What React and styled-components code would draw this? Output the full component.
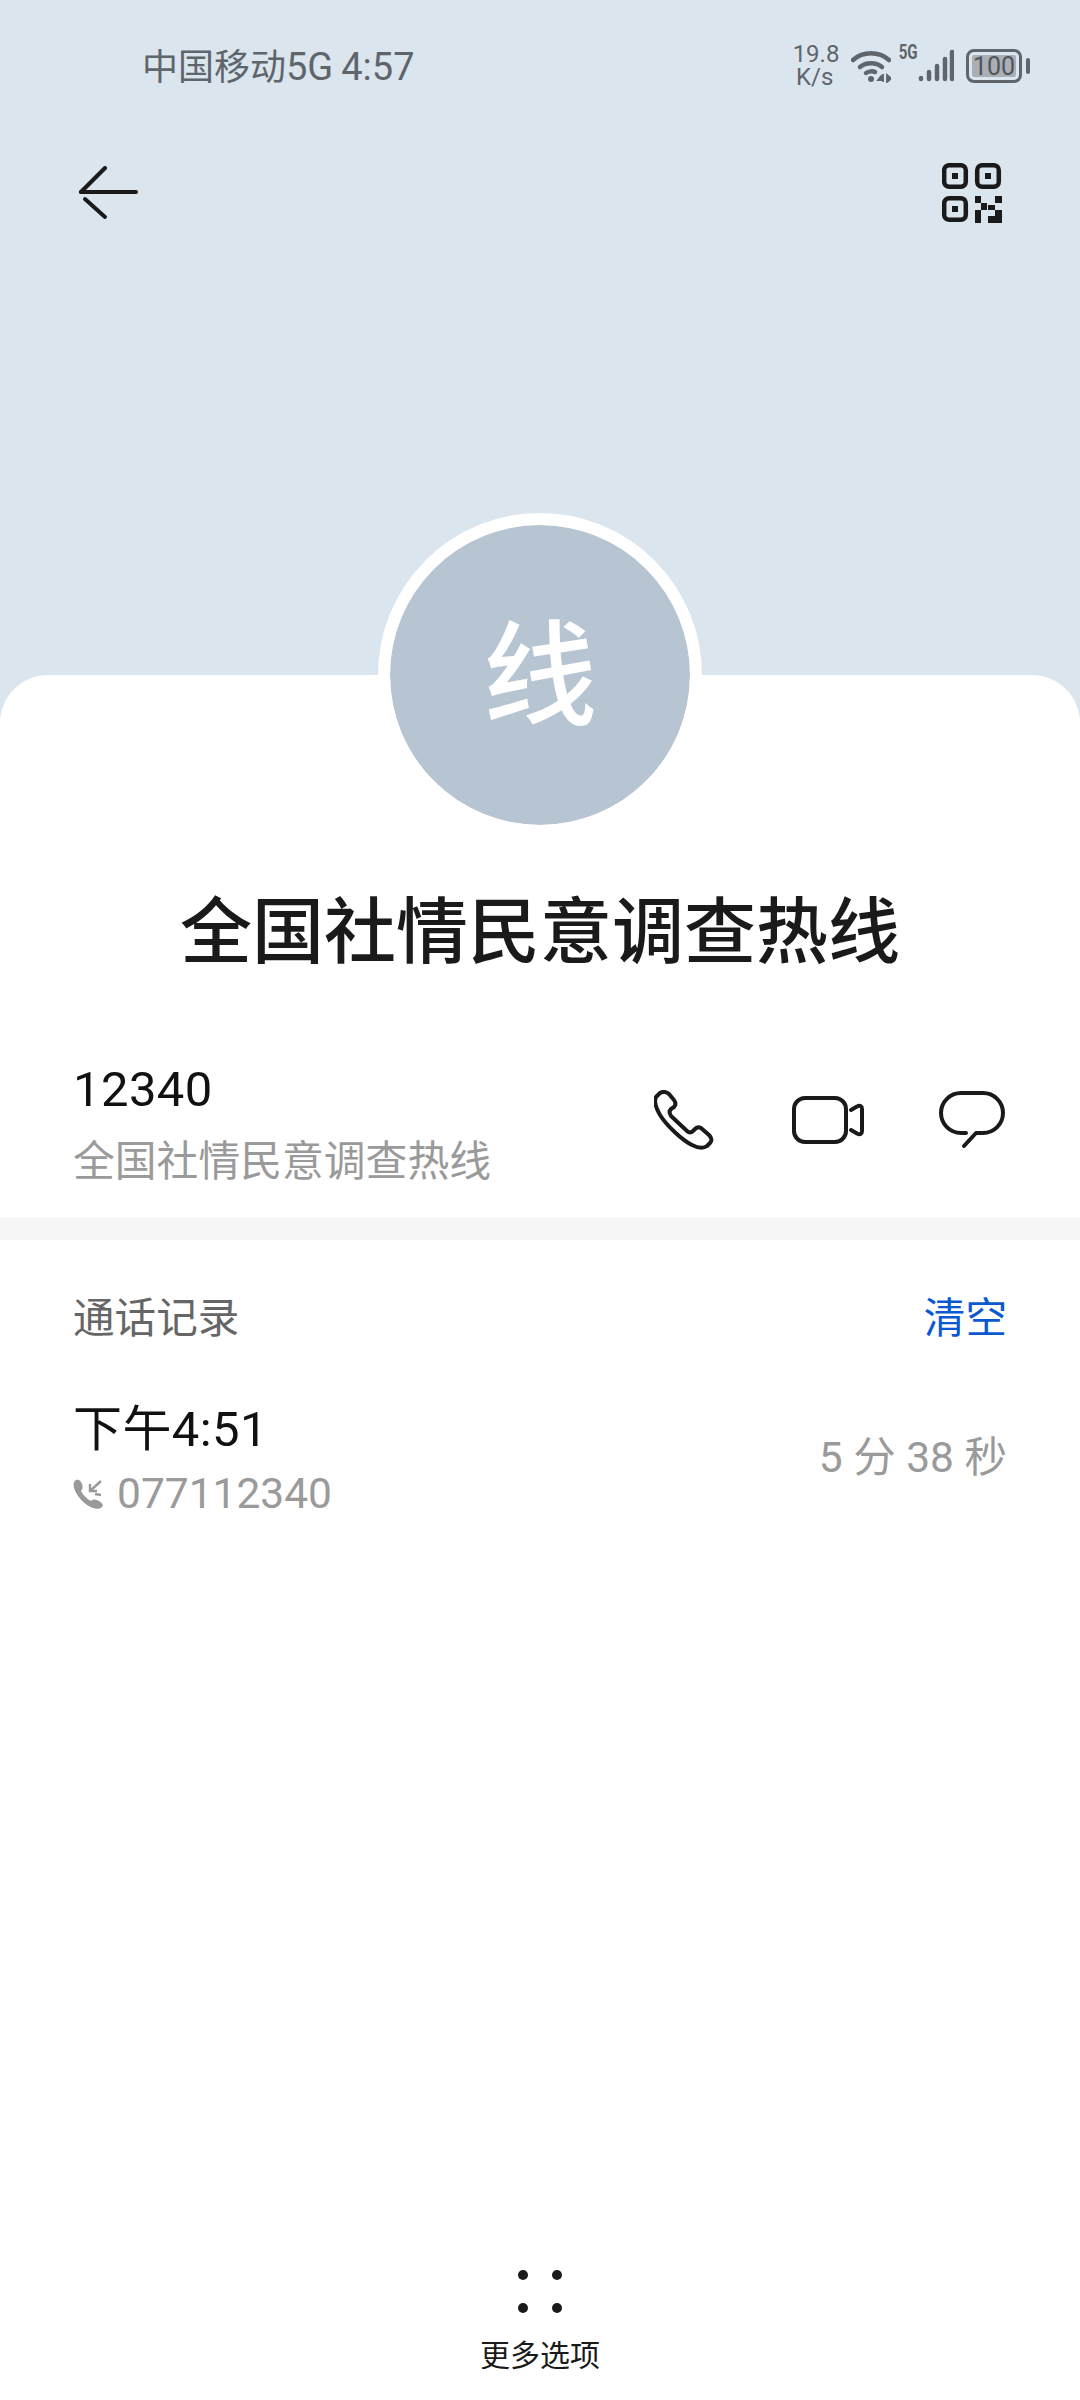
import React from "react";
import styled, { createGlobalStyle } from "styled-components";

const Global = createGlobalStyle`
  html, body { margin: 0; padding: 0; background: #fff; }
  body { font-family: Roboto, "Noto Sans CJK SC", sans-serif; }
  * { box-sizing: border-box; }
`;

const Page = styled.div`
  width: 1080px;
  height: 2400px;
  display: flex;
  flex-direction: column;
  background: #dbe5ee;
  overflow: hidden;
`;

const Header = styled.header`
  height: 675px;
  flex: none;
`;

const StatusBar = styled.div`
  height: 132px;
  display: flex;
  align-items: center;
  justify-content: space-between;
  padding: 0 50px 0 142px;
`;

const Carrier = styled.div`
  padding-top: 3px;
  display: flex;
  align-items: baseline;
  font-size: 36px;
  line-height: 44px;
  color: #5e656b;
`;

const CarrierLatin = styled.span`
  font-size: 38px;
  margin-left: ${(p) => p.$gap || 0}px;
`;

const StatusIcons = styled.div`
  display: flex;
  align-items: center;
`;

const Speed = styled.div`
  width: 44px;
  margin-right: 14px;
  font-size: 24px;
  line-height: 23px;
  text-align: center;
  color: #5e656b;
`;

const FiveG = styled.span`
  font-size: 21px;
  line-height: 18px;
  font-weight: 700;
  color: #5e656b;
  align-self: flex-start;
  margin: 0 -3px 0 4px;
  transform: scaleX(0.72);
`;

const Battery = styled.div`
  width: 56px;
  height: 34px;
  margin-left: 12px;
  padding: 3px;
  border: 3px solid #5e656b;
  border-radius: 8px;
`;

const BatteryFill = styled.div`
  height: 100%;
  display: flex;
  align-items: center;
  justify-content: center;
  background: #a9afb5;
  border-radius: 2px;
  font-size: 25px;
  color: #4f555a;
`;

const BatteryTip = styled.div`
  width: 4px;
  height: 16px;
  margin-left: 4px;
  border-radius: 2px;
  background: #5e656b;
`;

const Toolbar = styled.div`
  display: flex;
  align-items: center;
  justify-content: space-between;
  padding: 31px 78px 0 78px;
`;

const Card = styled.main`
  position: relative;
  flex: 1;
  display: flex;
  flex-direction: column;
  background: #fff;
  border-radius: 48px 48px 0 0;
`;

const Avatar = styled.div`
  position: absolute;
  top: -162px;
  left: 378px;
  width: 324px;
  height: 324px;
  display: flex;
  align-items: center;
  justify-content: center;
  padding-top: 4px;
  border: 12px solid #fff;
  border-radius: 50%;
  background: #b7c5d3;
  background-clip: padding-box;
  color: #fff;
  font-size: 114px;
  line-height: 130px;
  font-weight: 500;
`;

const Title = styled.h1`
  margin: 208px 0 0;
  font-size: 72px;
  line-height: 100px;
  font-weight: 500;
  text-align: center;
  color: #1a1a1a;
`;

const ContactRow = styled.section`
  display: flex;
  align-items: center;
  justify-content: space-between;
  margin-top: 71px;
  padding: 0 75px 19px 73px;
`;

const Number = styled.div`
  font-size: 49px;
  line-height: 72px;
  letter-spacing: 0.4px;
  color: #111;
`;

const Subtitle = styled.div`
  font-size: 41.8px;
  line-height: 72px;
  color: #9a9a9a;
`;

const Actions = styled.div`
  display: flex;
  align-items: center;
  gap: 75px;
  padding-bottom: 12px;
`;

const Divider = styled.div`
  height: 23px;
  background: #f6f6f6;
`;

const RecordsHead = styled.div`
  display: flex;
  align-items: center;
  justify-content: space-between;
  height: 80px;
  margin-top: 35px;
  padding: 0 73px;
  font-size: 41.6px;
  color: #666;
`;

const ClearLink = styled.span`
  color: #0a59d1;
`;

const CallRow = styled.div`
  display: flex;
  align-items: center;
  justify-content: space-between;
  margin-top: 42px;
  padding: 0 73px;
`;

const CallTime = styled.div`
  font-size: 49px;
  line-height: 66px;
  letter-spacing: 0.4px;
  color: #111;
`;

const CallLine = styled.div`
  display: flex;
  align-items: center;
  gap: 12px;
  font-size: 42.5px;
  line-height: 62px;
  color: #9a9a9a;
`;

const Duration = styled.div`
  padding-bottom: 15px;
  font-size: 42.5px;
  color: #9a9a9a;
`;

const MoreButton = styled.div`
  margin-top: auto;
  padding-bottom: 26px;
  display: flex;
  flex-direction: column;
  align-items: center;
  gap: 25px;
  font-size: 30px;
  line-height: 36px;
  color: #1a1a1a;
`;

const DotGrid = styled.div`
  display: grid;
  grid-template-columns: 10px 10px;
  gap: 23px 24px;
`;

const Dot = styled.span`
  width: 10px;
  height: 10px;
  border-radius: 50%;
  background: #1a1a1a;
`;

const WifiIcon = () => (
  <svg width="40" height="34" viewBox="0 0 40 34" fill="none" stroke="#5e656b" strokeWidth="4.5" strokeLinecap="round">
    <path d="M2 11C12 2 28 2 38 11" />
    <path d="M9 18C15 13 25 13 31 18" />
    <path d="M15 24C18 22 22 22 24 23" />
    <circle cx="20" cy="30" r="3" fill="#5e656b" stroke="none" />
    <path d="M31 26L27 31H33M32 25V33M36 26V33L40 29.5Z" strokeWidth="1.8" fill="#5e656b" strokeLinecap="butt" />
  </svg>
);

const SignalIcon = () => (
  <svg width="36" height="34" viewBox="0 0 36 34" stroke="#5e656b" strokeWidth="4.5" strokeLinecap="round">
    <path d="M3 30V29M11 30V23M19 30V17M27 30V10M34 30V3" />
  </svg>
);

const BackIcon = () => (
  <svg width="60" height="54" viewBox="0 0 60 54" fill="none" stroke="#1a1a1a" strokeWidth="4" strokeLinecap="round" strokeLinejoin="round">
    <path d="M58 26H3" />
    <path d="M27 2L3 26" />
    <path d="M7 33L27 51" />
  </svg>
);

const QrIcon = () => (
  <svg width="60" height="60" viewBox="0 0 60 60" fill="#1a1a1a">
    <g fill="none" stroke="#1a1a1a" strokeWidth="4.5">
      <rect x="2.2" y="2.2" width="21.6" height="21.6" rx="5" />
      <rect x="35.2" y="2.2" width="21.6" height="21.6" rx="5" />
      <rect x="2.2" y="35.2" width="21.6" height="21.6" rx="5" />
    </g>
    <rect x="10" y="10" width="6" height="6" />
    <rect x="43" y="10" width="6" height="6" />
    <rect x="10" y="43" width="6" height="6" />
    <path d="M33 33H39V40H33ZM39 40H45V47H39ZM33 47H39V60H33ZM53 33H60V40H53ZM46 42H53V47H46ZM53 47H60V60H53ZM46 53H53V60H46Z" />
  </svg>
);

const PhoneIcon = () => (
  <svg width="63" height="60" viewBox="0 0 63 60" fill="none" stroke="#1a1a1a" strokeWidth="4" strokeLinejoin="round">
    <path d="M6 3C9 1 13 2 15 4L20 10C22 13 22 15 20 17L17 19C15 21 15 23 17 26L33 41C35 43 37 43 39 41L41 39C43 37 45 37 47 38L55 45C58 48 58 51 56 53L53 56C49 59 44 58 38 55C28 50 13 36 6 25C2 18 0 11 2 7Z" />
  </svg>
);

const VideoIcon = () => (
  <svg width="72" height="48" viewBox="0 0 72 48" fill="none" stroke="#1a1a1a" strokeWidth="4" strokeLinecap="round" strokeLinejoin="round">
    <rect x="2" y="2" width="52" height="44" rx="11" />
    <path d="M59 14L65 10.500C68 9 70 10 70 13V35C70 38 68 39 65 37.500L59 34" />
  </svg>
);

const ChatIcon = () => (
  <svg width="66" height="58" viewBox="0 0 66 58" fill="none" stroke="#1a1a1a" strokeWidth="4" strokeLinecap="round" strokeLinejoin="round">
    <path d="M27 42H22C11 42 2 33 2 22C2 11 11 2 22 2H44C55 2 64 11 64 22C64 33 55 42 44 42H37L25 55" />
  </svg>
);

const MissedCallIcon = () => (
  <svg width="32" height="30" viewBox="0 0 32 30" fill="none">
    <path d="M3 1C6 0 8 2 9 5C10 8 10 10 8 12C10 16 14 20 18 22C20 20 23 20 26 22C29 24 31 26 29 28C26 31 20 30 14 26C8 22 3 15 1 9C0 5 1 2 3 1Z" fill="#999" />
    <path d="M28 2L17 12M17 5V12H24" stroke="#999" strokeWidth="2.4" />
    <path d="M22 15L28 16" stroke="#999" strokeWidth="2.4" />
  </svg>
);

export default function App() {
  return (
    <Page>
      <Global />
      <Header>
        <StatusBar>
          <Carrier>
            中国移动
            <CarrierLatin>5G</CarrierLatin>
            <CarrierLatin $gap={8}>4:57</CarrierLatin>
          </Carrier>
          <StatusIcons>
            <Speed>19.8<br />K/s</Speed>
            <WifiIcon />
            <FiveG>5G</FiveG>
            <SignalIcon />
            <Battery>
              <BatteryFill>100</BatteryFill>
            </Battery>
            <BatteryTip />
          </StatusIcons>
        </StatusBar>
        <Toolbar>
          <BackIcon />
          <QrIcon />
        </Toolbar>
      </Header>
      <Card>
        <Avatar>线</Avatar>
        <Title>全国社情民意调查热线</Title>
        <ContactRow>
          <div>
            <Number>12340</Number>
            <Subtitle>全国社情民意调查热线</Subtitle>
          </div>
          <Actions>
            <PhoneIcon />
            <VideoIcon />
            <ChatIcon />
          </Actions>
        </ContactRow>
        <Divider />
        <RecordsHead>
          <span>通话记录</span>
          <ClearLink>清空</ClearLink>
        </RecordsHead>
        <CallRow>
          <div>
            <CallTime>下午4:51</CallTime>
            <CallLine>
              <MissedCallIcon />
              077112340
            </CallLine>
          </div>
          <Duration>5 分 38 秒</Duration>
        </CallRow>
        <MoreButton>
          <DotGrid>
            <Dot /><Dot /><Dot /><Dot />
          </DotGrid>
          更多选项
        </MoreButton>
      </Card>
    </Page>
  );
}
